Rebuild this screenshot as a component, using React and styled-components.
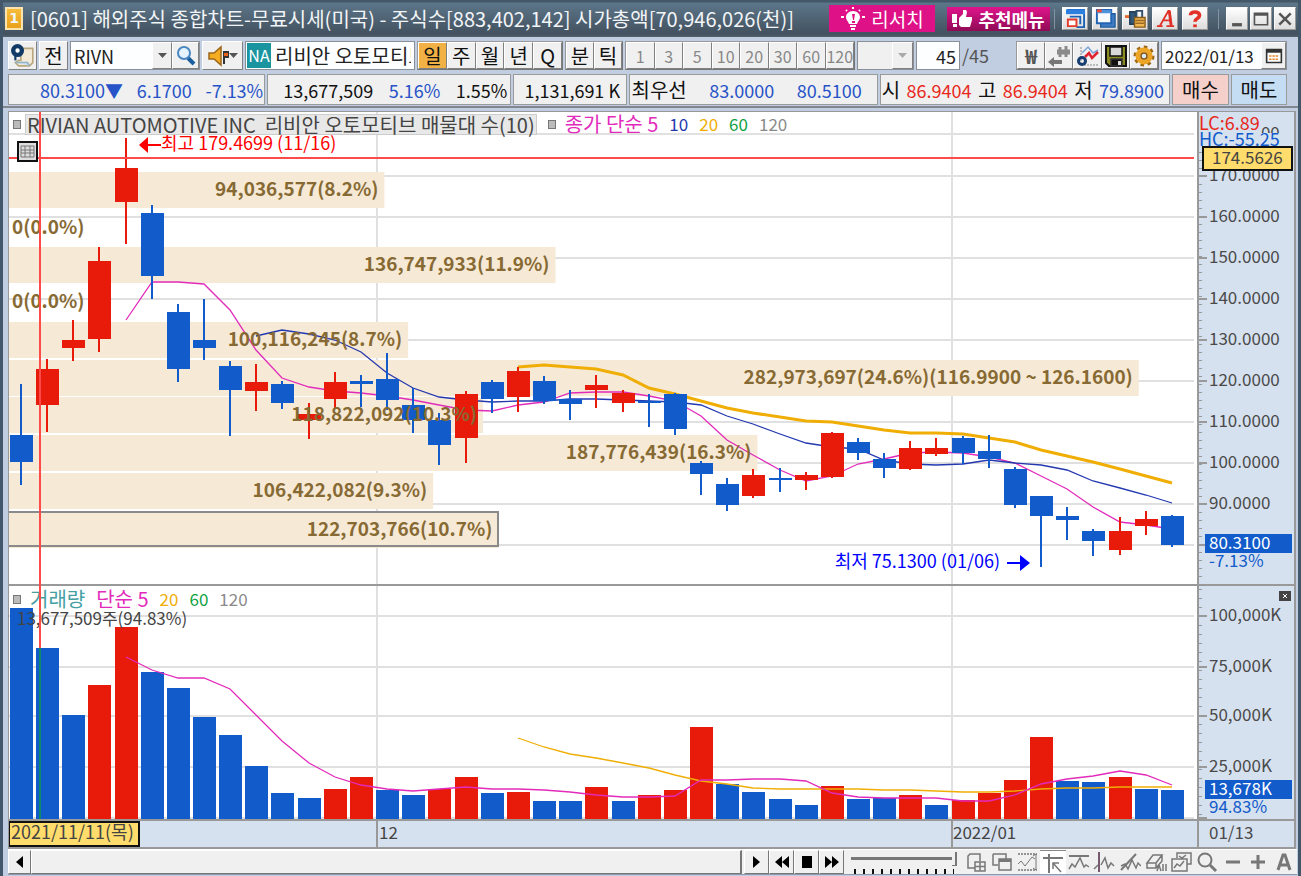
import React, { useLayoutEffect, useRef, useState } from "react";
import styled, { createGlobalStyle } from "styled-components";

const FONT = `"Noto Sans CJK KR", sans-serif`;
const RED = "#e81a0a";
const BLUE = "#115bcb";
const MAGENTA = "#e22bbb";
const NAVY = "#2438b0";
const ORANGE = "#f0ae05";
const GREEN = "#12a244";
const GRAY = "#8a8a8a";
const PALE = "#d6e1ef";

const GlobalStyle = createGlobalStyle`
  * { box-sizing: border-box; }
  body { margin: 0; background: #c1cee2; }
  button, input, select { font-family: ${FONT}; margin: 0; padding: 0; border-radius: 0; }
`;

const Window = styled.main`
  display: flex;
  flex-direction: column;
  min-height: 100vh;
  overflow: hidden;
  background: #c1cee2;
  border-left: 3px solid #43576a;
  border-right: 3px solid #43576a;
  font-family: ${FONT};
  font-size: 20px;
  line-height: 24px;
  white-space: nowrap;
`;

const TitleBar = styled.header`
  display: flex;
  align-items: center;
  height: 37px;
  padding-left: 2px;
  background: linear-gradient(#435769 0 2px, #5c7689 3px, #43515f 34px, #52616e);
  color: #f2f5f7;
`;

const Badge = styled.span`
  width: 18px;
  height: 23px;
  margin-right: 7px;
  border: 2px solid #fbe3ae;
  background: linear-gradient(#f7bc3b, #e9a01c);
  font: bold 14px/19px "DejaVu Sans", sans-serif;
  text-align: center;
`;

const Title = styled.h1`
  flex: 1;
  min-width: 0;
  margin: 0;
  font-size: 20px;
  font-weight: 400;
  line-height: 26px;
`;

const Promo = styled.button`
  display: flex;
  align-items: center;
  justify-content: center;
  gap: 5px;
  flex: none;
  width: ${(p) => (p.$wide ? 106 : 103)}px;
  height: ${(p) => (p.$wide ? 27 : 24)}px;
  margin-right: ${(p) => (p.$wide ? 12 : 4)}px;
  border: 0;
  background: ${(p) => (p.$wide ? "#de1187" : "linear-gradient(#e0148c, #8f0a55)")};
  color: #fff;
  font-size: ${(p) => (p.$wide ? 19 : 18)}px;
  font-weight: ${(p) => (p.$wide ? 400 : 700)};
`;

const Separator = styled.span`
  width: 1px;
  height: 20px;
  margin-right: 7px;
  margin-left: ${(p) => p.$left || 0}px;
  background: #8294a3;
`;

const TitleButton = styled.button`
  display: flex;
  align-items: center;
  justify-content: center;
  flex: none;
  width: ${(p) => (p.$small ? 22 : 26)}px;
  height: 23px;
  margin-right: ${(p) => (p.$small ? 2 : 4)}px;
  border: 1px solid #f9f9f9;
  border-right-color: #999;
  border-bottom-color: #999;
  background: linear-gradient(#fff, #dcdcdc);
`;

const Toolbar = styled.div`
  display: flex;
  align-items: stretch;
  gap: 2px;
  height: 29px;
  margin: 4px 11px 4px 5px;
`;

const Key = styled.button`
  display: flex;
  align-items: center;
  justify-content: center;
  flex: ${(p) => (p.$fill ? "1 1 0" : "none")};
  min-width: 0;
  width: ${(p) => p.$w || 28}px;
  border: 1px solid;
  border-color: #fff #808080 #808080 #fff;
  background: ${(p) => (p.$on ? "#f2b144" : "#f0f0f0")};
  color: ${(p) => (p.$dim ? "#888" : "#111")};
  font-size: ${(p) => (p.$dim ? 16 : 20)}px;
  line-height: 24px;
`;

const Won = styled.span`
  color: #555;
  font-weight: 700;
`;

const KeyGroup = styled.div`
  display: flex;
  width: ${(p) => p.$w}px;
  border: 1px solid #999;
  border-right-color: #777;
  border-bottom-color: #777;
`;

const Field = styled.div`
  display: flex;
  align-items: stretch;
  width: ${(p) => p.$w}px;
  border: 1px solid #8b8f96;
  background: ${(p) => (p.$dim ? "#f0f0f0" : "#fdfeff")};
  overflow: hidden;
`;

const TextBox = styled.input`
  flex: 1;
  min-width: 0;
  width: 20px;
  border: 0;
  padding: 0 3px;
  background: transparent;
  color: #222;
  font-size: ${(p) => p.$size || 18}px;
  text-align: ${(p) => (p.$right ? "right" : "left")};
`;

const Market = styled.span`
  width: 24px;
  margin: 1px;
  background: #1a95a0;
  color: #fff;
  font-size: 16px;
  line-height: 25px;
  text-align: center;
`;

const Total = styled.span`
  flex: 1;
  color: #555;
  font-size: 18px;
  line-height: 28px;
`;

const InfoRow = styled.div`
  display: grid;
  grid-template-columns:
    minmax(0, 257fr) minmax(0, 244fr) minmax(0, 113fr) minmax(0, 249fr) minmax(0, 290fr)
    57px 56px;
  gap: 2px;
  height: 29px;
  margin: 0 11px 3px 5px;
`;

const Cell = styled.div`
  display: flex;
  align-items: center;
  justify-content: space-between;
  padding: 0 ${(p) => p.$pr || 3}px 0 ${(p) => p.$pl || 3}px;
  border: 1px solid #9a9a9a;
  background: #f0f0f0;
  color: #111;
`;

const Num = styled.span`
  color: ${(p) => p.$c || "#111"};
  font-size: 18px;
`;

const Trade = styled.button`
  border: 1px solid #9a9a9a;
  background: ${(p) => p.$bg};
  color: #111;
  font-size: 20px;
`;

const Rule = styled.hr`
  width: 100%;
  height: 2px;
  margin: 0 0 3px;
  border: 0;
  background: #82868e;
`;

const ChartFrame = styled.section`
  display: flex;
  margin: 0 2px 0 5px;
  border-left: 1px solid #999;
  border-top: 1px solid #999;
`;

const PlotArea = styled.div`
  position: relative;
  flex: 1;
  min-width: 0;
  background: #fff;
`;

const Axis = styled.div`
  flex: none;
  width: 99px;
  background: ${PALE};
`;

const Drawing = styled.svg`
  display: block;
  font-family: ${FONT};
  font-size: 17px;
`;

const Overlay = styled(Drawing)`
  position: absolute;
  left: 0;
  top: 0;
  pointer-events: none;
`;

const Legend = styled.div`
  position: absolute;
  left: 4px;
  top: ${(p) => p.$top}px;
  display: flex;
  align-items: center;
  gap: 11px;
  height: 22px;
  line-height: 22px;
`;

const Mark = styled.span`
  width: 8px;
  height: 9px;
  border: 1px solid #777;
  background: #bbb;
  margin-right: ${(p) => (p.$tight ? -7 : -2)}px;
`;

const Name = styled.span`
  padding: 0 1px;
  border: 1px solid #ccc;
  background: #e8e8e8;
  color: #444;
  line-height: 19px;
  white-space: pre;
`;

const Tone = styled.span`
  color: ${(p) => p.$c};
  font-size: ${(p) => (p.$num ? 17 : 20)}px;
`;

const Footer = styled.footer`
  display: flex;
  align-items: stretch;
  height: 26px;
  margin: 0 1px 0 5px;
  background: #f0f0f0;
  border-top: 1px solid #fff;
  border-bottom: 1px solid #8e9aac;
`;

const ScrollKey = styled.button`
  display: flex;
  align-items: center;
  justify-content: center;
  flex: none;
  width: ${(p) => p.$w || 25}px;
  border: 1px solid;
  border-color: #fff #777 #777 #fff;
  background: #f0f0f0;
`;

const Thumb = styled.div`
  flex: 1;
  margin-right: 2px;
  border: 1px solid;
  border-color: #fff #777 #777 #fff;
  border-right-width: 2px;
`;

const SliderBox = styled.label`
  width: 106px;
  margin: 0 6px 0 7px;
  background: repeating-linear-gradient(90deg, #111 0 2px, transparent 2px 9px) 3px 19px / 100px 5px no-repeat;
`;

const Slider = styled.input`
  display: block;
  appearance: none;
  width: 100%;
  height: 18px;
  background: linear-gradient(#777, #777) 0 7px / 100% 3px no-repeat;

  &::-webkit-slider-thumb {
    appearance: none;
    width: 5px;
    height: 14px;
    background: #f0f0f0;
    border-right: 2px solid #777;
    border-bottom: 1px solid #777;
  }
`;

const Tools = styled.div`
  display: flex;
  flex: none;
  width: 334px;
`;

const Tool = styled.button`
  display: flex;
  align-items: center;
  justify-content: center;
  flex: 1 1 0;
  min-width: 0;
  border: 0;
  border-top: ${(p) => (p.$on ? "1px solid #888" : "0")};
  background: ${(p) => (p.$on ? "#fff" : "transparent")};
`;

/* colour, high, body top, body bottom, low, volume top, volume colour where it differs */
const bars = [
  ["b", 384, 435, 462, 485, 608], ["r", 359, 369, 405, 432, 648, "b"], ["r", 320, 340, 348, 361, 715, "b"],
  ["r", 247, 261, 339, 352, 685], ["r", 138, 168, 202, 244, 627], ["b", 205, 213, 276, 299, 672],
  ["b", 304, 312, 369, 382, 688], ["b", 299, 340, 348, 360, 717], ["b", 361, 366, 390, 436, 735],
  ["r", 364, 382, 391, 411, 766, "b"], ["b", 381, 384, 403, 409, 793], ["r", 403, 414, 420, 439, 798, "b"],
  ["r", 372, 382, 399, 408, 789], ["b", 375, 381, 384, 407, 777, "r"], ["b", 353, 379, 400, 410, 790],
  ["b", 388, 405, 420, 433, 795], ["b", 413, 420, 445, 465, 789, "r"], ["r", 391, 394, 438, 463, 777],
  ["b", 380, 382, 399, 413, 793], ["r", 367, 371, 397, 412, 792], ["b", 376, 381, 401, 404, 801],
  ["b", 390, 399, 404, 420, 801], ["r", 375, 385, 390, 408, 787], ["r", 390, 393, 403, 412, 801, "b"],
  ["b", 394, 401, 403, 427, 795, "r"], ["b", 393, 394, 429, 435, 790, "r"], ["b", 461, 463, 474, 495, 727, "r"],
  ["b", 478, 484, 505, 511, 784], ["r", 469, 475, 496, 498, 792, "b"], ["b", 468, 478, 480, 492, 799],
  ["r", 472, 475, 480, 490, 805, "b"], ["r", 432, 433, 477, 478, 786], ["b", 438, 442, 453, 460, 799],
  ["b", 453, 459, 468, 478, 798], ["r", 441, 448, 469, 470, 795], ["r", 438, 448, 454, 456, 805, "b"],
  ["b", 436, 438, 453, 464, 800, "r"], ["b", 435, 451, 459, 468, 793, "r"], ["b", 467, 469, 505, 508, 780, "r"],
  ["b", 496, 496, 516, 567, 737, "r"], ["b", 507, 516, 520, 540, 781], ["b", 529, 531, 541, 556, 782],
  ["r", 517, 531, 550, 555, 777], ["r", 511, 519, 526, 535, 789, "b"], ["b", 515, 516, 545, 547, 790],
];

const averages = [
  { color: MAGENTA, from: 4, y: [320, 282, 282, 284, 310, 350, 378, 387, 391, 393, 396, 400, 405, 410, 411, 405, 402, 393, 392, 392, 396, 401, 416, 440, 455, 470, 481, 476, 464, 459, 453, 452, 453, 457, 463, 476, 489, 507, 522, 525, 529] },
  { color: NAVY, from: 9, y: [336, 330, 334, 340, 352, 373, 388, 397, 400, 402, 401, 401, 399, 399, 400, 401, 402, 405, 416, 424, 434, 443, 447, 449, 460, 464, 465, 464, 460, 463, 465, 470, 481, 488, 495, 503] },
  { color: ORANGE, from: 19, width: 3, y: [367, 365, 367, 369, 375, 388, 394, 401, 408, 413, 417, 421, 422, 426, 430, 433, 433, 434, 438, 442, 450, 456, 462, 469, 476, 483] },
];

const volumeAverages = [
  { color: ORANGE, from: 19, y: [738, 747, 754, 758, 763, 768, 775, 781, 784, 788, 789, 789, 789, 789, 790, 790, 791, 792, 792, 791, 789, 788, 788, 787, 787, 787] },
  { color: MAGENTA, from: 4, y: [657, 670, 678, 678, 689, 715, 741, 763, 777, 785, 789, 791, 789, 787, 789, 789, 790, 792, 795, 797, 797, 796, 780, 780, 779, 779, 781, 793, 797, 798, 798, 798, 801, 801, 795, 784, 779, 776, 771, 775, 785] },
];

/* share of the plot width, top, label */
const profile = [
  [0.316, 172, "94,036,577(8.2%)"], [0, 210, "0(0.0%)"], [0.46, 247, "136,747,933(11.9%)"],
  [0, 284, "0(0.0%)"], [0.336, 322, "100,116,245(8.7%)"],
  [0.951, 360, "282,973,697(24.6%)(116.9900 ~ 126.1600)"], [0.399, 397, "118,822,092(10.3%)"],
  [0.63, 435, "187,776,439(16.3%)"], [0.357, 473, "106,422,082(9.3%)"], [0.412, 512, "122,703,766(10.7%)"],
];

const prices = [180, 170, 160, 150, 140, 130, 120, 110, 100, 90, 80];
const priceY = (p) => Math.round(545 - (p - 80) * 4.105);
const volumes = [[616, "100,000K"], [667, "75,000K"], [716, "50,000K"], [767, "25,000K"], [818, ""]];

const TOP = 112;
const HEIGHT = 737;

function useWidth() {
  const ref = useRef(null);
  const [width, setWidth] = useState(1188);
  useLayoutEffect(() => {
    const update = () => setWidth(Math.round(ref.current.getBoundingClientRect().width));
    update();
    const ro = new ResizeObserver(update);
    ro.observe(ref.current);
    return () => ro.disconnect();
  }, []);
  return [ref, width];
}

function Plot({ width }) {
  const step = (width - 37) / 44;
  const cx = (i) => Math.floor(12.4 + i * step);
  const fill = (c) => (c === "r" ? RED : BLUE);
  const line = ({ color, from, y, width: w = 1.3 }, k) => (
    <polyline key={k} fill="none" stroke={color} strokeWidth={w}
      points={y.map((v, i) => `${cx(from + i)},${v}`).join(" ")} />
  );
  const months = [cx(14) - 11, cx(36) - 12];

  return (
    <Drawing width={width} height={HEIGHT} viewBox={`0 ${TOP} ${width} ${HEIGHT}`}>
      <g fill="#e0e0e0">
        {prices.map((p) => <rect key={p} x="0" y={priceY(p) - 1} width={width - 3} height="2" />)}
        {volumes.map(([y]) => <rect key={y} x="0" y={y - 1} width={width - 3} height="2" />)}
        {months.map((x) => <rect key={x} x={x} y={TOP} width="2" height="709" />)}
      </g>
      {profile.map(([share, y], i) => (
        <g key={y}>
          <rect x="0" y={y} width={share * width} height="36" fill="#f6e9d6" />
          {i === 9 && (
            <path d={`M0 ${y}H${Math.round(share * width)}v34H0`} fill="none" stroke="#8a8a8a" strokeWidth="2" />
          )}
        </g>
      ))}
      {averages.map(line)}
      {bars.map(([c, high, top, bottom, low], i) => (
        <g key={i} fill={fill(c)}>
          <rect x={cx(i) - 1} y={high} width="2" height={low - high} />
          <rect x={cx(i) - 11} y={top} width="23" height={bottom - top} />
        </g>
      ))}
      {bars.map(([c, , , , , vol, vc], i) => (
        <rect key={i} x={cx(i) - 11} y={vol} width="23" height={819 - vol} fill={fill(vc || c)} />
      ))}
      {volumeAverages.map(line)}
      <g fill="#876a33" fontWeight="700" fontSize="19">
        {profile.map(([share, y, label]) => (
          <text key={y} x={share ? share * width - 6 : 3} y={y + 24} textAnchor={share ? "end" : "start"}>{label}</text>
        ))}
      </g>
      <g fill="#f00" fontSize="18">
        <path d="M130 145l9-8v7h13v2h-13v7z" />
        <text x="152" y="150">최고 179.4699 (11/16)</text>
      </g>
      <g fill="#00f" fontSize="18">
        <text x={cx(39) - 41} y="568" textAnchor="end">최저 75.1300 (01/06)</text>
        <path d={`M${cx(39) - 34} 562h13v-7l10 8-10 8v-7h-13z`} />
      </g>
      <rect x="0" y="584" width={width} height="2" fill="#999" />
      <text x="8" y="625" fill="#444">13,677,509주(94.83%)</text>
      <rect x="0" y="819" width={width} height="2" fill="#999" />
      <rect x="0" y="821" width={width} height="27" fill={PALE} />
      <g fill="#999">
        {months.map((x) => <rect key={x} x={x} y="821" width="2" height="27" />)}
        <rect x="0" y="847" width={width} height="2" />
      </g>
      <g fill="#444">
        <text x={months[0] + 3} y="839">12</text>
        <text x={months[1] + 2} y="839">2022/01</text>
      </g>
    </Drawing>
  );
}

function Crosshair({ width }) {
  return (
    <>
      <rect x="0" y="157" width={width - 3} height="2" fill="#ff4a4a" />
      <rect x="30" y={TOP} width="2" height="536" fill="#ff4a4a" />
      <rect x="30" y="648" width="2" height="171" fill="#0e8a68" />
      <rect x="9" y="142" width="19" height="19" fill="#ddd" stroke="#111" strokeWidth="2" />
      <path d="M12 146h13v11h-13zM12 150h13M12 153h13M16 146v11M21 146v11" fill="none" stroke="#777" />
      <rect x="0" y="822" width="130" height="24" fill="#ffdc6b" stroke="#111" strokeWidth="2" />
      <text x="2" y="839" fill="#444" fontSize="18">2021/11/11(목)</text>
    </>
  );
}

function AxisDrawing() {
  const minor = [];
  for (let y = 120; y < 584; y += 8) minor.push(y);
  for (let y = 589; y < 818; y += 9) minor.push(y);
  return (
    <Drawing width="99" height={HEIGHT} viewBox={`0 ${TOP} 99 ${HEIGHT}`}>
      <g fill="#999">
        {minor.map((y) => <rect key={y} x="1" y={y} width="4" height="1" />)}
        {prices.slice(1).map((p) => <rect key={p} x="1" y={priceY(p) - 1} width="9" height="2" />)}
        {volumes.map(([y]) => <rect key={y} x="1" y={y - 1} width="9" height="2" />)}
        <rect x="0" y={TOP} width="2" height={HEIGHT} />
        <rect x="97" y={TOP} width="2" height={HEIGHT} />
        <rect x="0" y="584" width="98" height="2" />
        <rect x="0" y="819" width="98" height="2" />
        <rect x="0" y="847" width="98" height="2" />
      </g>
      <g fill="#4a4a4a">
        {prices.slice(0, 10).map((p) => (
          <text key={p} x="12" y={priceY(p) + 5}>{`${p}.0000`}</text>
        ))}
        {volumes.map(([y, label]) => label && <text key={y} x="12" y={y + 5}>{label}</text>)}
        <text x="12" y="839">01/13</text>
      </g>
      <rect x="2" y={TOP} width="62" height="21" fill={PALE} />
      <rect x="2" y="133" width="88" height="14" fill={PALE} />
      <text x="2" y="130" fill="#e8281c" fontSize="18">LC:6.89</text>
      <text x="2" y="146" fill={BLUE} fontSize="18">HC:-55.25</text>
      <rect x="6" y="147" width="89" height="23" fill="#ffdc6b" stroke="#111" strokeWidth="2" />
      <text x="15" y="164" fill="#444">174.5626</text>
      <rect x="8" y="534" width="87" height="19" fill={BLUE} />
      <text x="12" y="549" fill="#fff">80.3100</text>
      <text x="12" y="567" fill={BLUE}>-7.13%</text>
      <rect x="82" y="591" width="12" height="10" fill="#444" />
      <path d="M86 594l4 4M90 594l-4 4" stroke="#fff" />
      <rect x="8" y="780" width="87" height="19" fill={BLUE} />
      <text x="12" y="795" fill="#fff">13,678K</text>
      <text x="12" y="813" fill={BLUE}>94.83%</text>
    </Drawing>
  );
}

const Icon = ({ size = 22, children }) => (
  <svg width={size} height={size} viewBox="0 0 22 22" fill="none" stroke="#333" strokeWidth="1.5">{children}</svg>
);

const Down = ({ c = "#555" }) => (
  <svg width="9" height="5" viewBox="0 0 9 5" fill={c}><path d="M0 0h9L4.500 5z" /></svg>
);

const tools = [
  ["새 차트", <path d="M15 10V3H5L3 5v12h7M10 11h10v9H10zM15 11v9M10 15.500h10" />],
  ["겹쳐 보기", <><path d="M2 3h13v5M2 3v11h5M8 8h12v11H8z" /><path d="M8 9.500h12" strokeWidth="3" /></>],
  ["구간", <><path d="M2 3h19M2 19h19" strokeDasharray="2 1" /><path d="M2 13l3-3 4 5 7-9 3 2M20 3v16M17 5l3-2M17 17l3 2" strokeWidth="1" /></>],
  ["십자선", <><path d="M1 6h20M7 2v19" strokeWidth="2" /><path d="M11 11l8 9M11 17v-6h6" /></>],
  ["수평선", <><path d="M1 5h20" strokeWidth="2" /><path d="M1 18l3-5 3 3 5-9 4 9 2-2 3 2" /></>],
  ["수직선", <><path d="M6 1v20" strokeWidth="2" stroke="#755a70" /><path d="M1 18l4-4M8 14l4-7 3 10 3-5 3 3" /></>],
  ["추세선", <><path d="M2 19L17 3" strokeWidth="2" /><path d="M2 15l4-2 3 5 4-9 4 8 2-5 3 3" /></>],
  ["모두 지우기", <path d="M2 12l6-8h9l-6 8zM2 12v5h9v-5M11 17l6-7V4M12 20l2-6 2 6M18 13v7M21 13v7" />],
  ["차트 복사", <path d="M7 7V2h14v11h-4M2 8h15v12H2zM4 17l3-4 3 2 4-5M9 5l3 2 4-3" />],
  ["돋보기", <><circle cx="9" cy="9" r="6.500" strokeWidth="2" /><path d="M14 14l6 6" strokeWidth="3" /></>],
  ["축소", <path d="M4 11h14" strokeWidth="3" />],
  ["확대", <path d="M4 11h14M11 4v14" strokeWidth="3" />],
  ["자동", <path d="M5 19l5-15h2l5 15M7 14h8" strokeWidth="3" />],
];

function App() {
  const [plotRef, width] = useWidth();
  const [period, setPeriod] = useState("일");

  return (
    <Window>
      <GlobalStyle />
      <TitleBar>
        <Badge>1</Badge>
        <Title>[0601] 해외주식 종합차트-무료시세(미국) - 주식수[883,402,142] 시가총액[70,946,026(천)]</Title>
        <Promo $wide>
          <svg width="26" height="24" viewBox="0 0 26 24" fill="#fff">
            <path d="M13 4c-4 0-7 3-7 6 0 3 2 4 3 7h8c1-3 3-4 3-7 0-3-3-6-7-6zM10 18h6v2h-6zM11 21h4v2h-4z" />
            <path d="M12 7h3l-1 6h-1zM12 14h3v2h-3z" fill="#de1187" />
            <path d="M13 0v2M6 3l1 1M20 3l-1 1M1 10h3M22 10h3" stroke="#fff" strokeWidth="2" />
          </svg>
          리서치
        </Promo>
        <Promo>
          <svg width="21" height="18" viewBox="0 0 21 18" fill="#fff">
            <path d="M0 4h5v9H0zM1 14h4v3H1zM7 8l4-4V0h3l1 2-1 5h6v3l-2 7H9l-2-2z" />
          </svg>
          추천메뉴
        </Promo>
        <Separator />
        <TitleButton aria-label="화면 배치">
          <Icon size={21}><path d="M2 2h18v18h-8" stroke="#1b62b5" strokeWidth="2" /><path d="M1 4h20" stroke="#2d80df" strokeWidth="5" /><path d="M3 12h9v7H3z" stroke="#e33c2a" strokeWidth="2" fill="#fff" /><path d="M5 9h11v8" stroke="#1b62b5" strokeWidth="2" /></Icon>
        </TitleButton>
        <TitleButton aria-label="창 복제">
          <Icon size={21}><path d="M6 6h15v14H6z" fill="#3f7dc5" stroke="#235e9f" /><path d="M2 2h15v14H2z" fill="#f7faff" stroke="#2365b3" strokeWidth="2" /><path d="M2 4h15" stroke="#4e93dd" strokeWidth="3" /><path d="M2 3h5" stroke="#f04a30" strokeWidth="3" /></Icon>
        </TitleButton>
        <TitleButton aria-label="화면 잠금">
          <Icon size={21}><path d="M0 9h7" stroke="#e66a2c" strokeWidth="3" /><path d="M5 4h6v13H5z" fill="#31577a" stroke="#253d54" /><path d="M12 10V3h6v7" stroke="#31506b" strokeWidth="2" /><path d="M10 10h11v10H10z" fill="#efb653" stroke="#8c5d18" /><path d="M11 13h9M11 16h9" stroke="#9c6a20" /></Icon>
        </TitleButton>
        <TitleButton aria-label="글꼴">
          <Icon size={21}><path d="M2 19h6M12 19h8M5 19L14 3h1l2 16M9 13h7" stroke="#df3128" strokeWidth="2" /><path d="M15 3l2 16" stroke="#df3128" strokeWidth="3" /></Icon>
        </TitleButton>
        <TitleButton aria-label="도움말">
          <Icon size={20}><path d="M6 7c0-5 10-5 10 0 0 4-5 3-5 7" stroke="#e23126" strokeWidth="4" /><path d="M9 17h4v3H9z" fill="#e23126" stroke="none" /></Icon>
        </TitleButton>
        <Separator $left={6} />
        <TitleButton $small aria-label="최소화"><Icon size={18}><path d="M5 18h12" stroke="#555" strokeWidth="4" /></Icon></TitleButton>
        <TitleButton $small aria-label="최대화"><Icon size={18}><path d="M3 4h16v14H3zM3 6h16" stroke="#555" strokeWidth="2" /></Icon></TitleButton>
        <TitleButton $small aria-label="닫기"><Icon size={18}><path d="M4 4l14 14M18 4L4 18" stroke="#555" strokeWidth="3" /></Icon></TitleButton>
      </TitleBar>

      <Toolbar>
        <Key $w={29} aria-label="종목 메모">
          <Icon size={24}><path d="M9 4h11v13l-3 3H7l-3-3 3-2h2z" fill="#f2ead6" stroke="#b9a77f" /><path d="M4 17h11l2 3" stroke="#8fb2cc" fill="#cfe2ef" /><circle cx="6" cy="6" r="4" fill="#fff" stroke="#123a66" strokeWidth="4" /><path d="M4 9v6" stroke="#123a66" strokeWidth="2" /></Icon>
        </Key>
        <Key $w={29}>전</Key>
        <Field $w={130}>
          <TextBox aria-label="종목코드" defaultValue="RIVN" />
          <Key $w={20} aria-label="종목 목록"><Down /></Key>
          <Key $w={27} aria-label="종목 검색">
            <Icon><path d="M13 13l6 6" stroke="#1b5f9f" strokeWidth="4" /><circle cx="9" cy="8" r="6" fill="#e4f3ff" stroke="#4986c1" strokeWidth="2" /></Icon>
          </Key>
        </Field>
        <Key $w={41} aria-label="소리">
          <Icon><path d="M2 8h5l7-6v18l-7-6H2z" fill="#f5ad21" stroke="#9b651b" /><path d="M17 6v13" stroke="#333" strokeWidth="2" /><path d="M17 7h5v5h-5" fill="#e8621e" stroke="#333" strokeWidth="2" /></Icon>
          <Down />
        </Key>
        <Field $w={170}>
          <Market>NA</Market>
          <TextBox $size={20} aria-label="종목명" defaultValue="리비안 오토모티브" />
        </Field>
        <KeyGroup $w={146}>
          {["일", "주", "월", "년", "Q"].map((p) => (
            <Key key={p} $fill $on={p === period} onClick={() => setPeriod(p)}>{p}</Key>
          ))}
        </KeyGroup>
        <KeyGroup $w={58}>
          {["분", "틱"].map((p) => (
            <Key key={p} $fill $on={p === period} onClick={() => setPeriod(p)}>{p}</Key>
          ))}
        </KeyGroup>
        <KeyGroup $w={230}>
          {[1, 3, 5, 10, 20, 30, 60, 120].map((n) => <Key key={n} $fill $dim>{n}</Key>)}
        </KeyGroup>
        <Field $w={57} $dim>
          <TextBox aria-label="간격" />
          <Key $w={21} aria-label="간격 목록"><Down c="#aaa" /></Key>
        </Field>
        <Field $w={44}><TextBox $right aria-label="봉 개수" defaultValue="45" /></Field>
        <Total>/45</Total>
        <KeyGroup $w={143}>
          <Key $fill aria-label="원화"><Won>₩</Won></Key>
          <Key $fill aria-label="이동"><Icon><path d="M9 7h13" stroke="#8b8b8b" strokeWidth="5" /><path d="M12 2v10M18 1v11" stroke="#8b8b8b" strokeWidth="3" /><path d="M0 17l6-5v3h8v4H6v3z" fill="#777" stroke="none" /></Icon></Key>
          <Key $fill aria-label="지표"><Icon><path d="M4 2v18h18" stroke="#aaa" strokeDasharray="2 1" /><path d="M5 8l6-6 5 6 5-3" stroke="#7aa5d8" /><path d="M8 12l4-4 3 5 6-6" stroke="#e02231" strokeWidth="2.500" /><circle cx="5" cy="16" r="3.500" stroke="#173e70" strokeWidth="3" /></Icon></Key>
          <Key $fill aria-label="저장"><Icon><path d="M1 1h20v20H4l-3-3z" fill="#8b8a22" stroke="#111" strokeWidth="2" /><path d="M5 2h12v9H5z" fill="#d8d8d8" stroke="#111" /><path d="M6 14h11v7H6z" fill="#111" /><path d="M13 16h3v4h-3z" fill="#ddd" stroke="none" /></Icon></Key>
          <Key $fill aria-label="설정"><Icon><circle cx="11" cy="11" r="8.500" stroke="#9c6812" strokeWidth="4" strokeDasharray="3.300 3.300" /><circle cx="11" cy="11" r="6" fill="#fff" stroke="#eca526" strokeWidth="5" /><circle cx="11" cy="11" r="3" stroke="#8b5815" fill="#d7e9f8" /></Icon></Key>
        </KeyGroup>
        <Field $w={126}>
          <TextBox aria-label="조회일" $size={17} defaultValue="2022/01/13" />
          <Key $w={25} aria-label="달력"><Icon size={18}><path d="M2 3h18v16H2z" fill="#fff" strokeWidth="2" /><path d="M2 5h18" strokeWidth="4" /><path d="M5 11h12M5 15h12" stroke="#e88b2a" strokeWidth="2" strokeDasharray="3 1" /></Icon></Key>
        </Field>
      </Toolbar>

      <InfoRow>
        <Cell $pl={31} $pr={1}>
          <Num $c="#2753c8">80.3100▼</Num>
          <Num $c="#2753c8">6.1700</Num>
          <Num $c="#2753c8">-7.13%</Num>
        </Cell>
        <Cell $pl={15}>
          <Num>13,677,509</Num>
          <Num $c="#2753c8">5.16%</Num>
          <Num>1.55%</Num>
        </Cell>
        <Cell $pl={10}><Num>1,131,691 K</Num></Cell>
        <Cell $pl={2} $pr={15}>
          최우선
          <Num $c="#2753c8">83.0000</Num>
          <Num $c="#2753c8">80.5100</Num>
        </Cell>
        <Cell $pl={1} $pr={5}>
          시<Num $c="#e8281c">86.9404</Num>
          고<Num $c="#e8281c">86.9404</Num>
          저<Num $c="#2753c8">79.8900</Num>
        </Cell>
        <Trade $bg="#f5cfca">매수</Trade>
        <Trade $bg="#c5ddf3">매도</Trade>
      </InfoRow>

      <Rule />

      <ChartFrame>
        <PlotArea ref={plotRef}>
          <Plot width={width} />
          <Legend $top={1}>
            <Mark $tight />
            <Name>RIVIAN AUTOMOTIVE INC  리비안 오토모티브 매물대 수(10)</Name>
            <Mark />
            <Tone $c={MAGENTA}>종가 단순 5</Tone>
            <Tone $num $c={NAVY}>10</Tone>
            <Tone $num $c={ORANGE}>20</Tone>
            <Tone $num $c={GREEN}>60</Tone>
            <Tone $num $c={GRAY}>120</Tone>
          </Legend>
          <Legend $top={476}>
            <Mark />
            <Tone $c="#45a0a3">거래량</Tone>
            <Tone $c={MAGENTA}>단순 5</Tone>
            <Tone $num $c={ORANGE}>20</Tone>
            <Tone $num $c={GREEN}>60</Tone>
            <Tone $num $c={GRAY}>120</Tone>
          </Legend>
          <Overlay width={width} height={HEIGHT} viewBox={`0 ${TOP} ${width} ${HEIGHT}`}>
            <Crosshair width={width} />
          </Overlay>
        </PlotArea>
        <Axis><AxisDrawing /></Axis>
      </ChartFrame>

      <Footer>
        <ScrollKey $w={23} aria-label="왼쪽으로"><svg width="7" height="12"><path d="M7 0v12L0 6z" /></svg></ScrollKey>
        <Thumb />
        <ScrollKey aria-label="재생"><svg width="7" height="12"><path d="M0 0v12l7-6z" /></svg></ScrollKey>
        <ScrollKey aria-label="뒤로"><svg width="14" height="12"><path d="M7 0v12L0 6zM14 0v12L7 6z" /></svg></ScrollKey>
        <ScrollKey aria-label="정지"><svg width="10" height="12"><path d="M0 0h10v12H0z" /></svg></ScrollKey>
        <ScrollKey aria-label="앞으로"><svg width="14" height="12"><path d="M0 0v12l7-6zM7 0v12l7-6z" /></svg></ScrollKey>
        <SliderBox><Slider type="range" aria-label="속도" defaultValue="100" /></SliderBox>
        <Tools>
          {tools.map(([label, art], i) => (
            <Tool key={label} $on={i === 3} aria-label={label}>
              <svg width="22" height="22" viewBox="0 0 22 22" fill="none" stroke="#777" strokeWidth="1.500">{art}</svg>
            </Tool>
          ))}
        </Tools>
      </Footer>
    </Window>
  );
}

export default App;
